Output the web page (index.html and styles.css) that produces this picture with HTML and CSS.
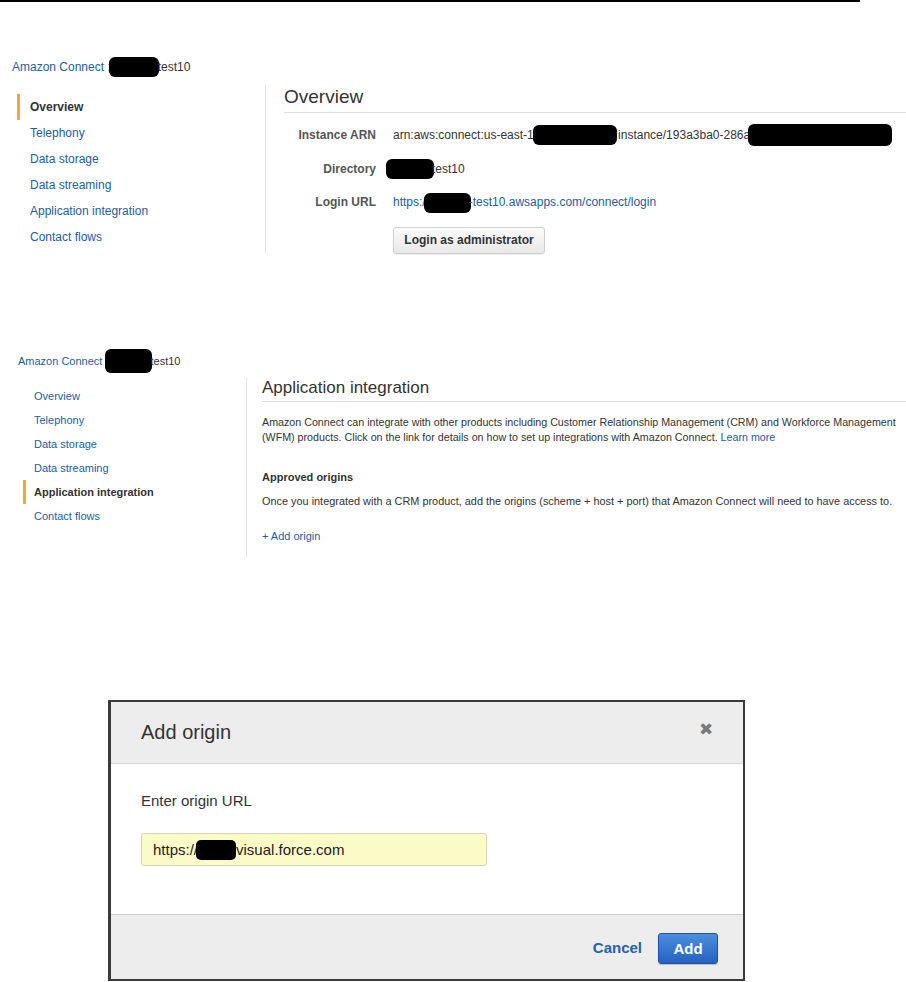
FILE: index.html
```html
<!DOCTYPE html>
<html lang="en">
<head>
<meta charset="utf-8">
<title>Amazon Connect – Application integration</title>
<link rel="stylesheet" href="styles.css">
</head>
<body>
<div class="page">
  <div class="rule"></div>

  <section class="shot shot-overview">
    <div class="crumb"><a class="link">Amazon Connect :</a><span class="redact r-crumb1"></span><span class="crumb-name">test10</span></div>
    <div class="console console-1">
      <nav class="side">
        <div class="side-item active">Overview</div>
        <div class="side-item">Telephony</div>
        <div class="side-item">Data storage</div>
        <div class="side-item">Data streaming</div>
        <div class="side-item">Application integration</div>
        <div class="side-item">Contact flows</div>
      </nav>
      <div class="content">
        <h1 class="title">Overview</h1>
        <div class="details">
          <div class="label">Instance ARN</div>
          <div class="value">arn:aws:connect:us-east-1<span class="redact r-arn1"></span>:instance/193a3ba0-286a<span class="redact r-arn2"></span></div>
          <div class="label">Directory</div>
          <div class="value"><span class="redact r-dir"></span>test10</div>
          <div class="label">Login URL</div>
          <div class="value"><a class="link">https:/<span class="redact r-url"></span>-test10.awsapps.com/connect/login</a></div>
          <div class="label"></div>
          <div class="value"><button class="btn-default">Login as administrator</button></div>
        </div>
      </div>
    </div>
  </section>

  <section class="shot shot-integration">
    <div class="crumb crumb-sm"><a class="link">Amazon Connect :</a><span class="redact r-crumb2"></span><span class="crumb-name">test10</span></div>
    <div class="console console-2">
      <nav class="side side-sm">
        <div class="side-item">Overview</div>
        <div class="side-item">Telephony</div>
        <div class="side-item">Data storage</div>
        <div class="side-item">Data streaming</div>
        <div class="side-item active">Application integration</div>
        <div class="side-item">Contact flows</div>
      </nav>
      <div class="content content-sm">
        <h1 class="title title-sm">Application integration</h1>
        <p class="para">Amazon Connect can integrate with other products including Customer Relationship Management (CRM) and Workforce Management<br>(WFM) products. Click on the link for details on how to set up integrations with Amazon Connect. <a class="link">Learn more</a></p>
        <h2 class="subhead">Approved origins</h2>
        <p class="para para-2">Once you integrated with a CRM product, add the origins (scheme + host + port) that Amazon Connect will need to have access to.</p>
        <a class="link add-origin">+ Add origin</a>
      </div>
    </div>
  </section>

  <div class="modal">
    <div class="modal-head">
      <span class="modal-title">Add origin</span>
      <span class="modal-close">&#x2716;</span>
    </div>
    <div class="modal-body">
      <div class="field-label">Enter origin URL</div>
      <div class="field-input">https://<span class="redact r-input"></span>visual.force.com</div>
    </div>
    <div class="modal-foot">
      <a class="btn-cancel">Cancel</a>
      <button class="btn-primary">Add</button>
    </div>
  </div>
</div>
</body>
</html>
```

FILE: styles.css
```css
* { box-sizing: border-box; }

html, body {
  margin: 0;
  padding: 0;
  background: #ffffff;
}

body {
  font-family: "Liberation Sans", Arial, Helvetica, sans-serif;
  color: #333333;
  width: 906px;
  height: 982px;
  overflow: hidden;
}

.page {
  width: 906px;
}

.rule {
  width: 860px;
  height: 2px;
  background: #000000;
}

.link {
  color: #215da6;
  text-decoration: none;
  cursor: pointer;
}

.redact {
  display: inline-block;
  background: #000000;
  border-radius: 6px;
  vertical-align: middle;
}

/* ---------- shot 1 ---------- */
.crumb {
  margin: 57px 0 0 12px;
  font-size: 12px;
  line-height: 16px;
  height: 16px;
  display: flex;
  align-items: center;
  white-space: nowrap;
}
.crumb-name { color: #333333; }
.r-crumb1 { width: 50px; height: 20px; margin-left: -2px; margin-right: -1px; }

.console {
  display: flex;
}
.console-1 {
  margin-top: 10px;
  height: 168px;
}

.side {
  width: 254px;
  flex: none;
  border-right: 1px solid #e6e6e6;
  padding: 9px 0 0 5px;
  margin-left: 12px;
}
.side-item {
  height: 26px;
  line-height: 26px;
  font-size: 12px;
  color: #215da6;
  padding-left: 10px;
  border-left: 3px solid transparent;
  white-space: nowrap;
}
.side-item.active {
  color: #333333;
  font-weight: bold;
  border-left-color: #f5a53a;
}

.content {
  flex: 1;
  padding-left: 18px;
  min-width: 0;
}
.title {
  margin: 0;
  font-size: 19px;
  font-weight: normal;
  line-height: 22px;
  padding: 1px 0 4px 0;
  border-bottom: 1px solid #dddddd;
  color: #333333;
}

.details {
  display: grid;
  grid-template-columns: 92px 1fr;
  column-gap: 17px;
  row-gap: 13px;
  margin-top: 11px;
  align-items: center;
}
.label {
  text-align: right;
  font-size: 12px;
  font-weight: bold;
  color: #555555;
  line-height: 20px;
  white-space: nowrap;
}
.value {
  font-size: 12px;
  line-height: 20px;
  color: #333333;
  white-space: nowrap;
  display: flex;
  align-items: center;
}
.r-arn1 { width: 84px; height: 20px; margin-left: -1px; margin-right: -2px; }
.r-arn2 { width: 144px; height: 22px; margin-left: -2px; }
.r-dir  { width: 48px; height: 20px; margin-left: -7px; margin-right: -2px; }
.r-url  { width: 47px; height: 20px; margin-left: -2px; margin-right: -2px; }

.btn-default {
  font-family: inherit;
  font-size: 12px;
  font-weight: bold;
  color: #333333;
  height: 27px;
  width: 152px;
  padding: 0;
  border: 1px solid #cfcfcf;
  border-radius: 3px;
  background: linear-gradient(#fbfbfb, #e8e8e8);
  box-shadow: 0 1px 1px rgba(0,0,0,0.08);
  margin-top: 1px;
}

/* ---------- shot 2 ---------- */
.crumb-sm {
  margin: 101px 0 0 18px;
  font-size: 11px;
  line-height: 14px;
  height: 14px;
}
.r-crumb2 { width: 47px; height: 24px; margin-left: -4px; margin-right: -1px; }

.console-2 {
  margin-top: 10px;
  height: 179px;
}
.side-sm {
  width: 229px;
  margin-left: 18px;
  padding: 6px 0 0 5px;
}
.side-sm .side-item {
  height: 24px;
  line-height: 24px;
  font-size: 11px;
  padding-left: 8px;
}

.content-sm {
  padding-left: 15px;
}
.title-sm {
  font-size: 17px;
  line-height: 20px;
  padding: 0 0 3px 0;
}
.para {
  margin: 13px 0 0 0;
  font-size: 10.7px;
  line-height: 15px;
  color: #333333;
  white-space: nowrap;
}
.subhead {
  margin: 25px 0 0 0;
  font-size: 11px;
  line-height: 15px;
  font-weight: bold;
  color: #333333;
}
.para-2 { margin-top: 9px; font-size: 10.9px; }
.add-origin {
  display: block;
  margin-top: 20px;
  font-size: 11px;
  line-height: 15px;
}

/* ---------- modal ---------- */
.modal {
  margin: 143px 0 0 108px;
  width: 637px;
  height: 281px;
  border: 2px solid #3b3b3b;
  border-left-width: 3px;
  display: flex;
  flex-direction: column;
  background: #ffffff;
}
.modal-head {
  height: 62px;
  flex: none;
  background: #ededed;
  border-bottom: 1px solid #d6d6d6;
  display: flex;
  align-items: center;
  justify-content: space-between;
  padding: 0 30px 0 30px;
}
.modal-title {
  font-size: 20px;
  color: #333333;
}
.modal-close {
  font-size: 17px;
  color: #7a7a7a;
  margin-top: -6px;
}
.modal-body {
  flex: none;
  height: 151px;
  padding: 28px 30px 0 30px;
  border-bottom: 1px solid #cccccc;
}
.field-label {
  font-size: 15px;
  line-height: 18px;
  color: #333333;
}
.field-input {
  margin-top: 23px;
  width: 346px;
  height: 33px;
  background: #fbfbc8;
  border: 1px solid #d4d4b4;
  border-radius: 3px;
  padding-left: 11px;
  font-size: 15px;
  color: #222222;
  display: flex;
  align-items: center;
  white-space: nowrap;
}
.r-input { width: 40px; height: 20px; margin-left: -2px; border-radius: 5px; }

.modal-foot {
  flex: 1;
  background: #ededed;
  display: flex;
  align-items: center;
  justify-content: flex-end;
  gap: 16px;
  padding: 0 25px 0 0;
}
.btn-cancel {
  font-size: 15px;
  font-weight: bold;
  color: #2462b2;
  cursor: pointer;
}
.btn-primary {
  font-family: inherit;
  font-size: 15px;
  font-weight: bold;
  color: #ffffff;
  width: 60px;
  height: 31px;
  padding: 0;
  border: 1px solid #1f52a0;
  border-radius: 3px;
  background: linear-gradient(#4a8fe0, #2563bf);
  box-shadow: 0 1px 1px rgba(0,0,0,0.2);
  margin-top: 2px;
}
```
